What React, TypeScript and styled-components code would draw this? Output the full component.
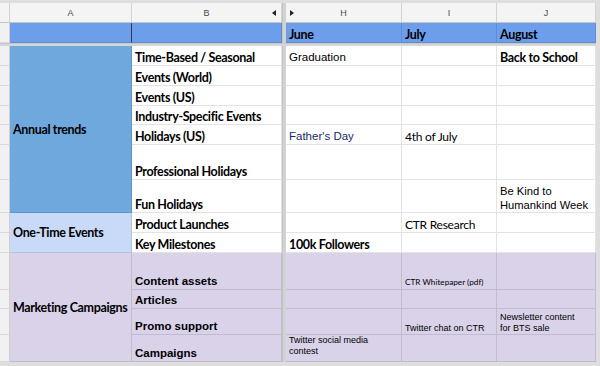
import React from 'react';
import styled, { createGlobalStyle } from 'styled-components';

const GlobalStyle = createGlobalStyle`
  html, body {
    margin: 0;
    padding: 0;
    background: #dedede;
  }
  * {
    box-sizing: border-box;
  }
`;

const CALIBRI = `Lato, "Open Sans", sans-serif`;
const HELV = `"Liberation Sans", Arial, sans-serif`;

const Sheet = styled.div`
  display: grid;
  grid-template-columns: 10px 122px 150px 4px 116px 95px 99px;
  grid-template-rows: 20px 20px 3px 20px 20px 20px 19px 20px 35px 33px 20px 20px 37px 19px 26px 27px;
  width: 600px;
  height: 366px;
  padding: 3px 4px 4px 0;
  background: #dedede;
  overflow: hidden;
`;

const Split = styled.div`
  grid-column: 4;
  grid-row: 1 / -1;
  background: #d2d2d2;
  border-left: 1px solid #c4c4c4;
`;

const FreezeBar = styled.div`
  grid-column: 1 / -1;
  grid-row: 3;
  background: #d6d6d6;
  border-top: 1px solid #c8c8c8;
`;

const ColHead = styled.div`
  display: flex;
  align-items: center;
  justify-content: center;
  position: relative;
  background: #f4f4f4;
  border-right: 1px solid #d4d4d4;
  border-bottom: 1px solid #c4c4c4;
  font-family: ${HELV};
  font-size: 9px;
  color: #4a4a4a;
`;

const Arrow = styled.span<{ $side: 'left' | 'right' }>`
  position: absolute;
  top: 7px;
  ${(p) => (p.$side === 'left' ? 'right: 5px;' : 'left: 4px;')}
  width: 0;
  height: 0;
  border-top: 3px solid transparent;
  border-bottom: 3px solid transparent;
  ${(p) =>
    p.$side === 'left'
      ? 'border-right: 4px solid #222;'
      : 'border-left: 4px solid #222;'}
`;

const RowNum = styled.div`
  background: #f1f1f1;
  border-right: 1px solid #cfcfcf;
  border-bottom: 1px solid #d8d8d8;
`;

type CellProps = {
  $bg?: string;
  $bold?: boolean;
  $font?: string;
  $size?: number;
  $color?: string;
  $valign?: 'end' | 'center' | 'start';
  $span?: number;
  $dark?: boolean;
  $lh?: number;
  $ls?: number;
};

const Cell = styled.div<CellProps>`
  display: flex;
  align-items: ${(p) => (p.$valign === 'center' ? 'center' : p.$valign === 'start' ? 'flex-start' : 'flex-end')};
  ${(p) => (p.$span ? `grid-row: span ${p.$span};` : '')}
  padding: 0 0 0 3px;
  background: ${(p) => p.$bg || '#ffffff'};
  border-right: 1px solid ${(p) => (p.$dark ? '#2f3a4f' : 'rgba(0, 0, 0, 0.11)')};
  border-bottom: 1px solid rgba(0, 0, 0, 0.11);
  font-family: ${(p) => p.$font || CALIBRI};
  font-weight: ${(p) => (p.$bold ? 700 : 400)};
  font-size: ${(p) => p.$size || 12}px;
  letter-spacing: ${(p) => (p.$ls !== undefined ? p.$ls : 0)}px;
  line-height: ${(p) => p.$lh || 1.2};
  color: ${(p) => p.$color || '#000000'};
  white-space: pre;
  overflow: hidden;
`;

const BLUE = '#6d9eeb';
const TREND = '#6fa8dc';
const ONCE = '#c9daf8';
const PURPLE = '#d9d2e9';

// Calibri-like text (bold labels and a few plain cells)
const calBold: CellProps = { $bold: true, $size: 12.5, $ls: -0.35 };
const calPlain: CellProps = { $size: 12, $ls: -0.25 };
const helv: CellProps = { $font: HELV, $size: 11.5 };
const helvSmall: CellProps = { $font: HELV, $size: 9, $lh: 1.2 };

type Row = {
  label: string;
  label2?: boolean;
  h: string;
  i: string;
  j: string;
  hProps?: CellProps;
  iProps?: CellProps;
  jProps?: CellProps;
  bg?: string;
};

const rows: Row[] = [
  { label: 'Time-Based / Seasonal', h: 'Graduation', i: '', j: 'Back to School', hProps: helv, jProps: calBold },
  { label: 'Events (World)', h: '', i: '', j: '' },
  { label: 'Events (US)', h: '', i: '', j: '' },
  { label: 'Industry-Specific Events', h: '', i: '', j: '' },
  { label: 'Holidays (US)', h: "Father's Day", i: '4th of July', j: '', hProps: { ...helv, $color: '#1a2a6e' }, iProps: calPlain },
  { label: 'Professional Holidays', h: '', i: '', j: '' },
  { label: 'Fun Holidays', h: '', i: '', j: 'Be Kind to\nHumankind Week', jProps: { ...helv, $size: 11.2, $lh: 1.2 } },
  { label: 'Product Launches', h: '', i: 'CTR Research', j: '', iProps: calPlain },
  { label: 'Key Milestones', h: '100k Followers', i: '', j: '', hProps: calBold },
  { label: 'Content assets', label2: true, bg: PURPLE, h: '', i: 'CTR Whitepaper (pdf)', j: '', iProps: { $size: 8.2, $lh: 1.6 } },
  { label: 'Articles', label2: true, bg: PURPLE, h: '', i: '', j: '' },
  { label: 'Promo support', label2: true, bg: PURPLE, h: '', i: 'Twitter chat on CTR', j: 'Newsletter content\nfor BTS sale', iProps: helvSmall, jProps: helvSmall },
  { label: 'Campaigns', label2: true, bg: PURPLE, h: 'Twitter social media\ncontest', i: '', j: '', hProps: { ...helvSmall, $valign: 'start' } },
];

const groups: Record<number, { text: string; span: number; bg: string }> = {
  0: { text: 'Annual trends', span: 7, bg: TREND },
  7: { text: 'One-Time Events', span: 2, bg: ONCE },
  9: { text: 'Marketing Campaigns', span: 4, bg: PURPLE },
};

export default function App() {
  return (
    <>
      <GlobalStyle />
      <Sheet>
        <Split />
        <FreezeBar />

        <ColHead />
        <ColHead>A</ColHead>
        <ColHead>
          B<Arrow $side="left" />
        </ColHead>
        <ColHead>
          H<Arrow $side="right" />
        </ColHead>
        <ColHead>I</ColHead>
        <ColHead>J</ColHead>

        <RowNum />
        <Cell $bg={BLUE} $dark />
        <Cell $bg={BLUE} />
        <Cell $bg={BLUE} {...calBold}>June</Cell>
        <Cell $bg={BLUE} {...calBold}>July</Cell>
        <Cell $bg={BLUE} {...calBold}>August</Cell>

        {rows.map((r, idx) => (
          <React.Fragment key={r.label}>
            <RowNum />
            {groups[idx] && (
              <Cell $bg={groups[idx].bg} $span={groups[idx].span} $valign="center" {...calBold}>
                {groups[idx].text}
              </Cell>
            )}
            {r.label2 ? (
              <Cell $bg={r.bg} $font={HELV} $bold $size={11.5}>
                {r.label}
              </Cell>
            ) : (
              <Cell $bg={r.bg} {...calBold}>
                {r.label}
              </Cell>
            )}
            <Cell $bg={r.bg} {...r.hProps}>{r.h}</Cell>
            <Cell $bg={r.bg} {...r.iProps}>{r.i}</Cell>
            <Cell $bg={r.bg} {...r.jProps}>{r.j}</Cell>
          </React.Fragment>
        ))}
      </Sheet>
    </>
  );
}
